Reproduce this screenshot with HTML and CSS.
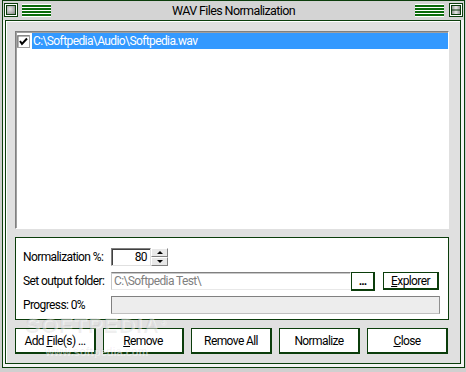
FILE: index.html
```html
<!DOCTYPE html>
<html lang="en">
<head>
  <meta charset="UTF-8" />
  <title>WAV Files Normalization</title>
  <link rel="stylesheet" href="styles.css">
</head>
<body>

  <div class="frame">
    <div class="window">

      <div class="titlebar">
        <svg class="sysbtn" width="14" height="14" viewBox="0 0 14 14">
          <defs>
            <radialGradient id="knob" cx="0.4" cy="0.4" r="0.7">
              <stop offset="0" stop-color="#e8e8e8" />
              <stop offset="1" stop-color="#8c8c8c" />
            </radialGradient>
          </defs>
          <rect x="0.5" y="0.5" width="13" height="13" fill="#fff" stroke="#0b3d0b" />
          <rect x="2.5" y="2.5" width="9" height="9" fill="url(#knob)" stroke="#0b3d0b" />
        </svg>
        <span class="grip"></span>
        <span class="title">WAV Files Normalization</span>
        <span class="grip"></span>
        <svg class="sysbtn" width="14" height="14" viewBox="0 0 14 14">
          <defs>
            <linearGradient id="bar" x1="0" y1="0" x2="1" y2="0">
              <stop offset="0" stop-color="#8c8c8c" />
              <stop offset="0.5" stop-color="#e8e8e8" />
              <stop offset="1" stop-color="#8c8c8c" />
            </linearGradient>
          </defs>
          <rect x="0.5" y="0.5" width="13" height="13" fill="#fff" stroke="#0b3d0b" />
          <rect x="2.5" y="2.5" width="9" height="9" fill="url(#bar)" stroke="#0b3d0b" />
          <line x1="2.5" y1="7" x2="11.5" y2="7" stroke="#0b3d0b" />
        </svg>
      </div>

      <div class="client">
        <div class="list">
          <div class="item">
            <svg class="check" width="13" height="13" viewBox="0 0 13 13">
              <rect x="0.5" y="0.5" width="12" height="12" fill="#fff" stroke="#a0a0a0" />
              <path d="M1 12V1h11" fill="none" stroke="#707070" />
              <polyline points="3,6 5,9 10,3.5" fill="none" stroke="#000" stroke-width="2" />
            </svg>
            <span class="path">C:\Softpedia\Audio\Softpedia.wav</span>
          </div>
        </div>

        <div class="options">
          <div class="row">
            <label>Normalization %:</label>
            <div class="spin">
              <span class="spin-value">80</span>
              <span class="spin-arrows">
                <span class="up"></span>
                <span class="down"></span>
              </span>
            </div>
          </div>
          <div class="row">
            <label>Set output folder:</label>
            <span class="folder">C:\Softpedia Test\</span>
            <button class="btn browse">...</button>
            <button class="btn explorer"><u>E</u>xplorer</button>
          </div>
          <div class="row">
            <label>Progress: 0%</label>
            <span class="progress"></span>
          </div>
        </div>

        <div class="buttons">
          <button class="btn">Add <u>F</u>ile(s) ...</button>
          <button class="btn"><u>R</u>emove</button>
          <button class="btn">Remove All</button>
          <button class="btn">Normalize</button>
          <button class="btn"><u>C</u>lose</button>
        </div>

        <div class="watermark">
          <span class="wm-big">SOFTPEDIA<sup>®</sup></span>
          <span class="wm-small">www.softpedia.com</span>
        </div>
      </div>

    </div>
  </div>

</body>
</html>
```

FILE: styles.css
```css
body {
  margin: 0;
  font-family: Roboto, "Liberation Sans", Arial, sans-serif;
  font-size: 12px;
  letter-spacing: -0.6px;
  color: #000;
}

.frame {
  width: 466px;
  height: 372px;
  box-sizing: border-box;
  padding: 0 2px 4px 2px;
  background: #d0d0d0;
  display: flex;
}

.window {
  flex: 1;
  display: flex;
  flex-direction: column;
  border: 1px solid #0b3d0b;
  background: #f4f4f4;
}

/* Title bar */
.titlebar {
  height: 19px;
  display: flex;
  align-items: flex-start;
  padding: 0 1px;
  background: #d4d4d4;
}

.sysbtn {
  margin-top: 2px;
  flex: none;
}

.grip {
  width: 29px;
  height: 13px;
  margin: 3px 5px 0 4px;
  background: repeating-linear-gradient(#fff 0 1px, #0b6b0b 1px 3px);
}

.title {
  flex: 1;
  text-align: center;
  font-size: 12.5px;
  line-height: 19px;
  white-space: nowrap;
}

/* Client area */
.client {
  flex: 1;
  position: relative;
  display: flex;
  flex-direction: column;
  margin: 0 3px 3px 2px;
  padding: 10px 11px 9px 9px;
  border: 1px solid #0b3d0b;
  background: #e0e0e0;
  box-shadow: inset 1px 1px #fff;
}

.list {
  flex: 1;
  padding-top: 1px;
  background: #fff;
  border: 1px solid;
  border-color: #808080 #fff #fff #808080;
  box-shadow: inset 1px 1px #a0a0a0;
}

.item {
  display: flex;
  align-items: center;
  height: 16px;
  padding-left: 1px;
}

.check {
  flex: none;
  margin-right: 2px;
}

.path {
  flex: 1;
  height: 16px;
  line-height: 16px;
  padding-left: 1px;
  background: #3399ff;
  color: #fff;
  white-space: nowrap;
}

/* Options panel */
.options {
  margin-top: 8px;
  display: flex;
  flex-direction: column;
  gap: 6px;
  padding: 10px 8px 5px 7px;
  background: #fff;
  border: 1px solid #0b3d0b;
}

.row {
  display: flex;
  align-items: center;
  height: 18px;
}

.row label {
  width: 88px;
  flex: none;
  white-space: nowrap;
}

.spin {
  display: flex;
  height: 18px;
}

.spin-value {
  width: 40px;
  box-sizing: border-box;
  padding-right: 3px;
  text-align: right;
  line-height: 16px;
  border: 1px solid;
  border-color: #808080 #e0e0e0 #e0e0e0 #808080;
  box-shadow: inset 1px 1px #404040;
}

.spin-arrows {
  width: 17px;
  display: flex;
  flex-direction: column;
}

.spin-arrows span {
  flex: 1;
  display: flex;
  align-items: center;
  justify-content: center;
  border: 1px solid;
  border-color: #fff #808080 #808080 #fff;
  background: #e8e8e8;
}

.spin-arrows .up::before,
.spin-arrows .down::before {
  content: "";
  border-left: 3px solid transparent;
  border-right: 3px solid transparent;
}

.spin-arrows .up::before {
  border-bottom: 3px solid #000;
}

.spin-arrows .down::before {
  border-top: 3px solid #000;
}

.folder {
  width: 240px;
  height: 18px;
  box-sizing: border-box;
  padding-left: 2px;
  line-height: 16px;
  color: #808080;
  white-space: nowrap;
  border: 1px solid;
  border-color: #808080 #fff #e8e8e8 #c8c8c8;
  box-shadow: inset 0 1px #c8c8c8;
}

.btn {
  font: inherit;
  letter-spacing: inherit;
  color: #000;
  padding: 0;
  background: #fff;
  border: 1px solid #0b3d0b;
  border-right-width: 2px;
  border-bottom-width: 2px;
  white-space: nowrap;
}

.browse {
  width: 24px;
  height: 19px;
  margin-top: 1px;
  font-weight: bold;
  letter-spacing: -1px;
}

.explorer {
  width: 56px;
  height: 18px;
  margin-left: 8px;
}

.progress {
  width: 329px;
  height: 18px;
  box-sizing: border-box;
  background: #ededed;
  border: 1px solid;
  border-color: #808080 #909090 #c0c0c0 #808080;
}

/* Bottom buttons */
.buttons {
  display: flex;
  gap: 7px;
  margin-top: 8px;
}

.buttons .btn {
  width: 81px;
  height: 26px;
}

.watermark {
  position: absolute;
  left: 19px;
  top: 292px;
  display: flex;
  flex-direction: column;
  align-items: center;
  pointer-events: none;
  letter-spacing: 0;
  color: rgba(0, 0, 0, 0.06);
  text-shadow: 1px 1px rgba(255, 255, 255, 0.5);
}

.wm-big {
  font-family: "Liberation Sans", Arial, sans-serif;
  font-size: 22px;
  font-weight: bold;
  letter-spacing: 1px;
}

.wm-big sup {
  font-size: 8px;
}

.wm-small {
  font-family: "Liberation Sans", Arial, sans-serif;
  font-size: 11px;
  font-weight: bold;
  margin-top: 6px;
}
```
